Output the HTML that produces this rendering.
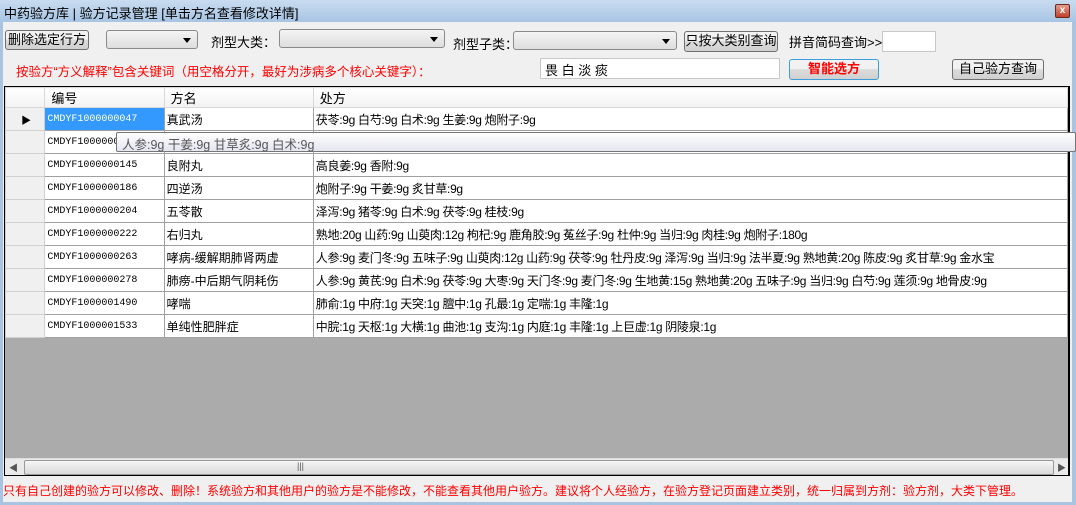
<!DOCTYPE html>
<html><head><meta charset="utf-8"><style>
*{margin:0;padding:0;box-sizing:border-box}
body{width:1076px;height:505px;overflow:hidden;background:#a9c4e0;font-family:"Liberation Sans","Noto Sans CJK SC","WenQuanYi Zen Hei",sans-serif;font-size:12px;color:#000;position:relative}
.a{position:absolute}
.title{left:0;top:0;width:1076px;height:22px;background:linear-gradient(#c9dcf0,#a8c5e4);}
.title span{position:absolute;left:4px;top:3px;font-size:13px}
.close{left:1055px;top:4px;width:15px;height:14px;background:linear-gradient(#e49c8c,#c0412a);border:1px solid #6b2a20;border-radius:2px;color:#fff;font-size:10px;text-align:center;line-height:12px;font-weight:bold}
.body{left:3px;top:22px;width:1069px;height:480px;background:#f0f0f0}
.btn{position:absolute;border:1px solid #707070;border-radius:3px;background:linear-gradient(#f2f2f2 45%,#dcdcdc 50%,#d0d0d0);text-align:center;font-size:13px;line-height:18px}
.cb{position:absolute;border:1px solid #8a8a8a;border-radius:3px;background:linear-gradient(#f4f4f4,#dedede);height:19px}
.cb:after{content:"";position:absolute;right:6px;top:7px;border:4px solid transparent;border-top:5px solid #000}
.lbl{position:absolute;font-size:13px}
.inp{position:absolute;background:#fff;border:1px solid #c8c8c8}
.grid{left:4px;top:86px;width:1066px;height:390px;border:1px solid #000;border-right:2px solid #000;border-bottom:2px solid #000;background:#ababab;overflow:hidden}
table{border-collapse:collapse;position:absolute;left:0;top:0;background:#fff;table-layout:fixed}
td{border:1px solid #a0a0a0;height:23px;padding-left:2px;font-size:12px;white-space:nowrap;overflow:hidden}
td.c1{font-family:"Liberation Mono","Noto Sans CJK SC",monospace;font-size:10px}
td.c3{font-size:12px;letter-spacing:-0.3px}
tr.h td{height:20px;background:linear-gradient(#fff,#f2f2f2);border-color:#d8d8d8;font-size:13px;padding-left:6px}
td.rh{background:#f0f0f0;border-color:#d0d0d0}
.sel{background:#3399ff;color:#fff}
.tip{left:116px;top:132px;width:960px;height:20px;background:linear-gradient(#fff,#e4e5f0);border:1px solid #767676;border-radius:2px;color:#555;font-size:12.5px;padding:1px 0 0 5px}
.hs{left:5px;top:458px;width:1063px;height:17px;background:#eaeaea;border-top:1px solid #ddd}
.thumb{left:19px;top:1px;width:1030px;height:15px;border:1px solid #999;border-radius:2px;background:linear-gradient(#f6f6f6,#dadada)}
.warn{left:3px;top:482px;color:#f00;font-size:12px;white-space:nowrap}
</style></head><body>
<div class="a title"><span>中药验方库 | 验方记录管理 [单击方名查看修改详情]</span></div>
<div class="a close">x</div>
<div class="a body"></div>
<div class="btn" style="left:5px;top:30px;width:84px;height:20px">删除选定行方</div>
<div class="cb" style="left:106px;top:30px;width:92px"></div>
<div class="lbl" style="left:211px;top:32px">剂型大类：</div>
<div class="cb" style="left:279px;top:29px;width:166px"></div>
<div class="lbl" style="left:453px;top:34px">剂型子类：</div>
<div class="cb" style="left:513px;top:31px;width:164px"></div>
<div class="btn" style="left:684px;top:31px;width:94px;height:21px">只按大类别查询</div>
<div class="lbl" style="left:789px;top:32px">拼音简码查询&gt;&gt;</div>
<div class="inp" style="left:882px;top:31px;width:54px;height:21px"></div>
<div class="lbl" style="left:16px;top:61px;color:#f00;font-size:12.5px">按验方“方义解释”包含关键词（用空格分开，最好为涉病多个核心关键字）：</div>
<div class="inp" style="left:540px;top:58px;width:240px;height:21px;font-size:13px;padding:1px 0 0 4px">畏 白 淡 痰</div>
<div class="btn" style="left:789px;top:59px;width:90px;height:21px;border-color:#3c9fdc;color:#f00;font-weight:bold;font-size:13px">智能选方</div>
<div class="btn" style="left:952px;top:59px;width:92px;height:21px">自己验方查询</div>
<div class="a grid">
<table>
<colgroup><col style="width:40px"><col style="width:120px"><col style="width:150px"><col style="width:756px"></colgroup>
<tr class="h"><td class="rh"></td><td>编号</td><td>方名</td><td>处方</td></tr>
<tr><td class="rh" style="text-align:center;font-size:10px">▶</td><td class="c1 sel">CMDYF1000000047</td><td>真武汤</td><td class="c3">茯苓:9g 白芍:9g 白术:9g 生姜:9g 炮附子:9g</td></tr>
<tr><td class="rh"></td><td class="c1">CMDYF1000000</td><td></td><td class="c3"></td></tr>
<tr><td class="rh"></td><td class="c1">CMDYF1000000145</td><td>良附丸</td><td class="c3">高良姜:9g 香附:9g</td></tr>
<tr><td class="rh"></td><td class="c1">CMDYF1000000186</td><td>四逆汤</td><td class="c3">炮附子:9g 干姜:9g 炙甘草:9g</td></tr>
<tr><td class="rh"></td><td class="c1">CMDYF1000000204</td><td>五苓散</td><td class="c3">泽泻:9g 猪苓:9g 白术:9g 茯苓:9g 桂枝:9g</td></tr>
<tr><td class="rh"></td><td class="c1">CMDYF1000000222</td><td>右归丸</td><td class="c3">熟地:20g 山药:9g 山萸肉:12g 枸杞:9g 鹿角胶:9g 菟丝子:9g 杜仲:9g 当归:9g 肉桂:9g 炮附子:180g</td></tr>
<tr><td class="rh"></td><td class="c1">CMDYF1000000263</td><td>哮病-缓解期肺肾两虚</td><td class="c3">人参:9g 麦门冬:9g 五味子:9g 山萸肉:12g 山药:9g 茯苓:9g 牡丹皮:9g 泽泻:9g 当归:9g 法半夏:9g 熟地黄:20g 陈皮:9g 炙甘草:9g 金水宝</td></tr>
<tr><td class="rh"></td><td class="c1">CMDYF1000000278</td><td>肺痨-中后期气阴耗伤</td><td class="c3">人参:9g 黄芪:9g 白术:9g 茯苓:9g 大枣:9g 天门冬:9g 麦门冬:9g 生地黄:15g 熟地黄:20g 五味子:9g 当归:9g 白芍:9g 莲须:9g 地骨皮:9g</td></tr>
<tr><td class="rh"></td><td class="c1">CMDYF1000001490</td><td>哮喘</td><td class="c3">肺俞:1g 中府:1g 天突:1g 膻中:1g 孔最:1g 定喘:1g 丰隆:1g</td></tr>
<tr><td class="rh"></td><td class="c1">CMDYF1000001533</td><td>单纯性肥胖症</td><td class="c3">中脘:1g 天枢:1g 大横:1g 曲池:1g 支沟:1g 内庭:1g 丰隆:1g 上巨虚:1g 阴陵泉:1g</td></tr>
</table>
</div>
<div class="a tip">人参:9g 干姜:9g 甘草炙:9g 白术:9g</div>
<div class="a hs"><span class="a" style="left:4px;top:2px;font-size:9px;color:#555">◀</span><div class="a thumb"><span class="a" style="left:272px;top:0;font-size:9px;color:#555">|||</span></div><span class="a" style="left:1052px;top:2px;font-size:9px;color:#555">▶</span></div>
<div class="a warn">只有自己创建的验方可以修改、删除！系统验方和其他用户的验方是不能修改，不能查看其他用户验方。建议将个人经验方，在验方登记页面建立类别，统一归属到方剂：验方剂，大类下管理。</div>
</body></html>
